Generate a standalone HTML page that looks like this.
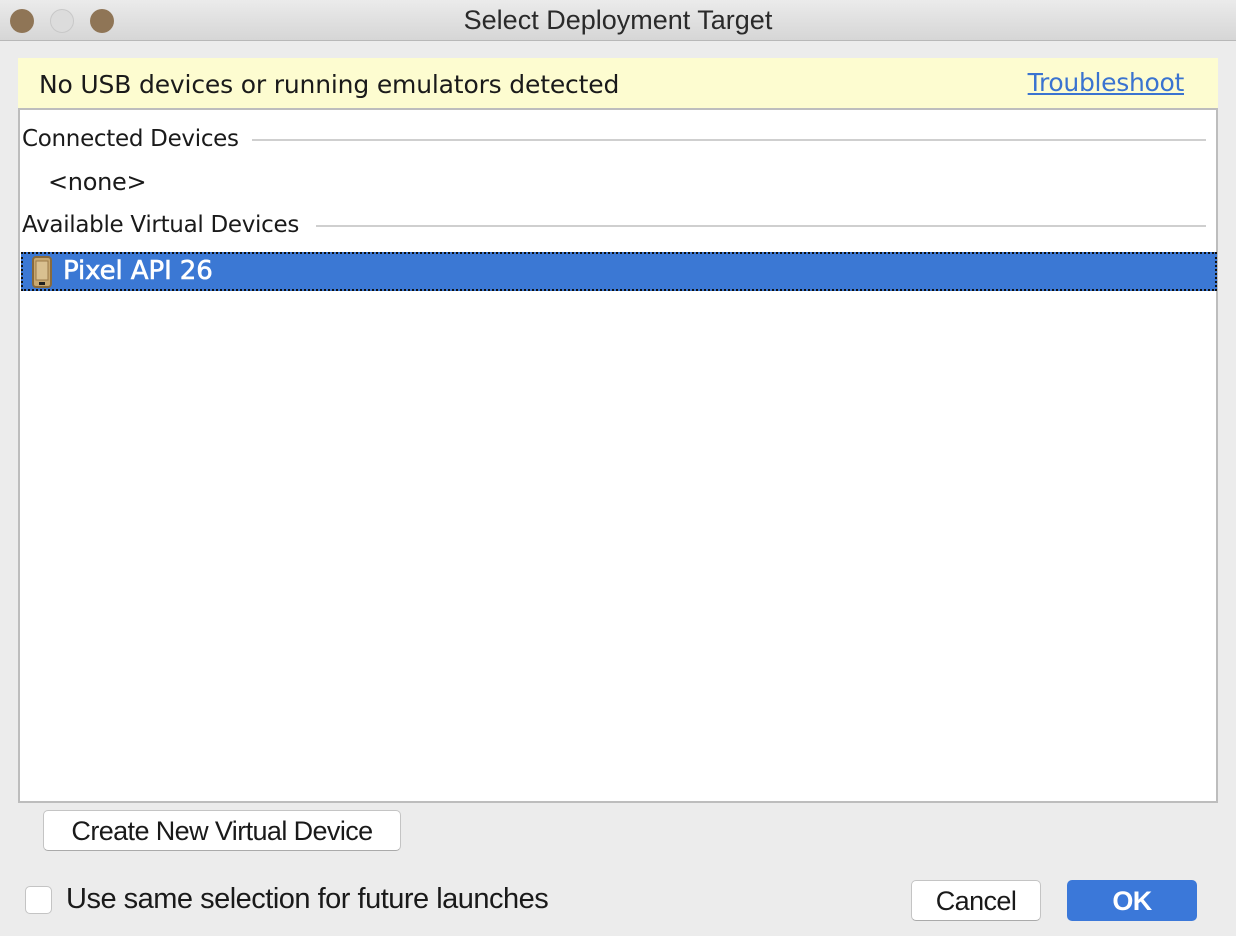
<!DOCTYPE html>
<html><head><meta charset="utf-8"><style>
*{margin:0;padding:0;box-sizing:border-box}
body{width:1236px;height:936px;background:#ececec;font-family:"Liberation Sans","DejaVu Sans",sans-serif;position:relative;overflow:hidden;color:#1a1a1a}
.title{position:absolute;left:0;top:0;width:1236px;height:41px;background:linear-gradient(#ebebeb,#d6d6d6);border-bottom:1px solid #b8b8b8;text-align:center;font-size:27px;line-height:41px;color:#2a2a2a}
.dot{position:absolute;top:9px;width:24px;height:24px;border-radius:50%;background:#8f7556}
.banner{position:absolute;left:18px;top:58px;width:1200px;height:52px;background:#fdfcd0;border-bottom:2px solid #bdbdbd}
.banner .t{position:absolute;left:21px;top:12px;font-size:25px;font-family:"DejaVu Sans",sans-serif;letter-spacing:-0.17px}
.banner a{position:absolute;right:34px;top:10px;font-size:25px;font-family:"DejaVu Sans",sans-serif;color:#3a73d0;text-decoration:underline;letter-spacing:-0.3px}
.list{position:absolute;left:18px;top:110px;width:1200px;height:693px;background:#fff;border:2px solid #bdbdbd;border-top:none}
.sec{position:absolute;left:2px;font-size:23px;font-family:"DejaVu Sans",sans-serif;letter-spacing:-0.3px}
.line{position:absolute;height:2px;background:#cfcfcf;right:10px}
.sel{position:absolute;left:1px;top:142px;width:1196px;height:39px;background:#3b78d4;border:2px dotted #111}
.sel span{position:absolute;left:40px;top:2px;color:#fff;font-size:26px;font-family:"DejaVu Sans",sans-serif;letter-spacing:-0.1px;-webkit-text-stroke:0.6px #fff}
.btn{position:absolute;background:#fff;border:1px solid #c4c4c4;border-bottom-color:#aaa;border-radius:5px;font-size:27px;text-align:center;letter-spacing:-0.6px}
</style></head><body>
<div class="title">Select Deployment Target</div>
<div class="dot" style="left:10px"></div>
<div class="dot" style="left:50px;background:#dcdcdc;border:1px solid #c8c8c8"></div>
<div class="dot" style="left:90px"></div>
<div class="banner"><span class="t">No USB devices or running emulators detected</span><a>Troubleshoot</a></div>
<div class="list">
 <div class="sec" style="top:16px">Connected Devices</div>
 <div class="line" style="left:232px;top:29px"></div>
 <div class="sec" style="top:58px;left:28px;font-size:24px">&lt;none&gt;</div>
 <div class="sec" style="top:102px">Available Virtual Devices</div>
 <div class="line" style="left:296px;top:115px"></div>
 <div class="sel">
  <svg style="position:absolute;left:9px;top:2px" width="20" height="32" viewBox="0 0 20 32"><rect x="1" y="1" width="18" height="30" rx="3" fill="#c8a870" stroke="#8a6a3a" stroke-width="2"/><rect x="4" y="5" width="12" height="19" fill="#d9c090" stroke="#9a7a4a"/><rect x="7" y="26" width="6" height="3" fill="#222"/></svg>
  <span>Pixel API 26</span>
 </div>
</div>
<div class="btn" style="left:43px;top:810px;width:358px;height:41px;line-height:40px">Create New Virtual Device</div>
<div style="position:absolute;left:25px;top:886px;width:27px;height:28px;background:#fff;border:1px solid #c4c4c4;border-radius:5px"></div>
<div style="position:absolute;left:66px;top:883px;font-size:29px;letter-spacing:-0.5px">Use same selection for future launches</div>
<div class="btn" style="left:911px;top:880px;width:130px;height:41px;line-height:40px">Cancel</div>
<div class="btn" style="left:1067px;top:880px;width:130px;height:41px;line-height:40px;background:#3b78d9;border-color:#3b78d9;color:#fff;font-weight:bold">OK</div>
</body></html>
